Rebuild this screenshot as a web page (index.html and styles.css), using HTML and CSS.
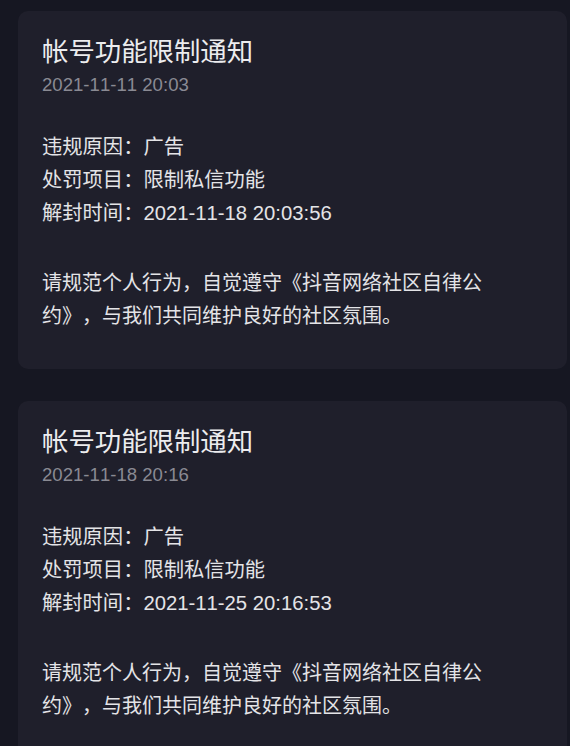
FILE: index.html
```
<!DOCTYPE html>
<html lang="zh-CN">
<head>
<meta charset="utf-8">
<link rel="stylesheet" href="styles.css">
</head>
<body>
<div class="list">
  <section class="card">
    <h2 class="title">帐号功能限制通知</h2>
    <div class="date">2021-11-11 20:03</div>
    <div class="info">
      <p>违规原因：广告</p>
      <p>处罚项目：限制私信功能</p>
      <p>解封时间：2021-11-18 20:03:56</p>
    </div>
    <p class="note">请规范个人行为，自觉遵守《抖音网络社区自律公约》，与我们共同维护良好的社区氛围。</p>
  </section>
  <section class="card">
    <h2 class="title">帐号功能限制通知</h2>
    <div class="date">2021-11-18 20:16</div>
    <div class="info">
      <p>违规原因：广告</p>
      <p>处罚项目：限制私信功能</p>
      <p>解封时间：2021-11-25 20:16:53</p>
    </div>
    <p class="note">请规范个人行为，自觉遵守《抖音网络社区自律公约》，与我们共同维护良好的社区氛围。</p>
  </section>
</div>
</body>
</html>
```
FILE: styles.css
```
html, body {
  margin: 0;
  padding: 0;
  background: #161722;
  height: 100%;
  overflow: hidden;
}
body {
  font-family: "Liberation Sans", "Noto Sans CJK SC", sans-serif;
  color: #e4e4e7;
  text-spacing-trim: space-all;
  font-kerning: none;
}
.list {
  display: flex;
  flex-direction: column;
  gap: 32px;
  padding: 11px 3px 0 18px;
}
.card {
  background: #1f1f2b;
  border-radius: 10px;
  padding: 23px 70px 36px 24px;
}
.title {
  margin: 0;
  font-size: 26.4px;
  font-weight: 400;
  line-height: 36px;
  color: #ececee;
}
.date {
  font-size: 18.6px;
  line-height: 30px;
  color: #8a8a93;
}
.info {
  margin-top: 31px;
}
.info p, .note {
  margin: 0;
  font-size: 20px;
  line-height: 33px;
}
.info p {
  font-size: 20.3px;
}
.note {
  margin-top: 37px;
}
```
